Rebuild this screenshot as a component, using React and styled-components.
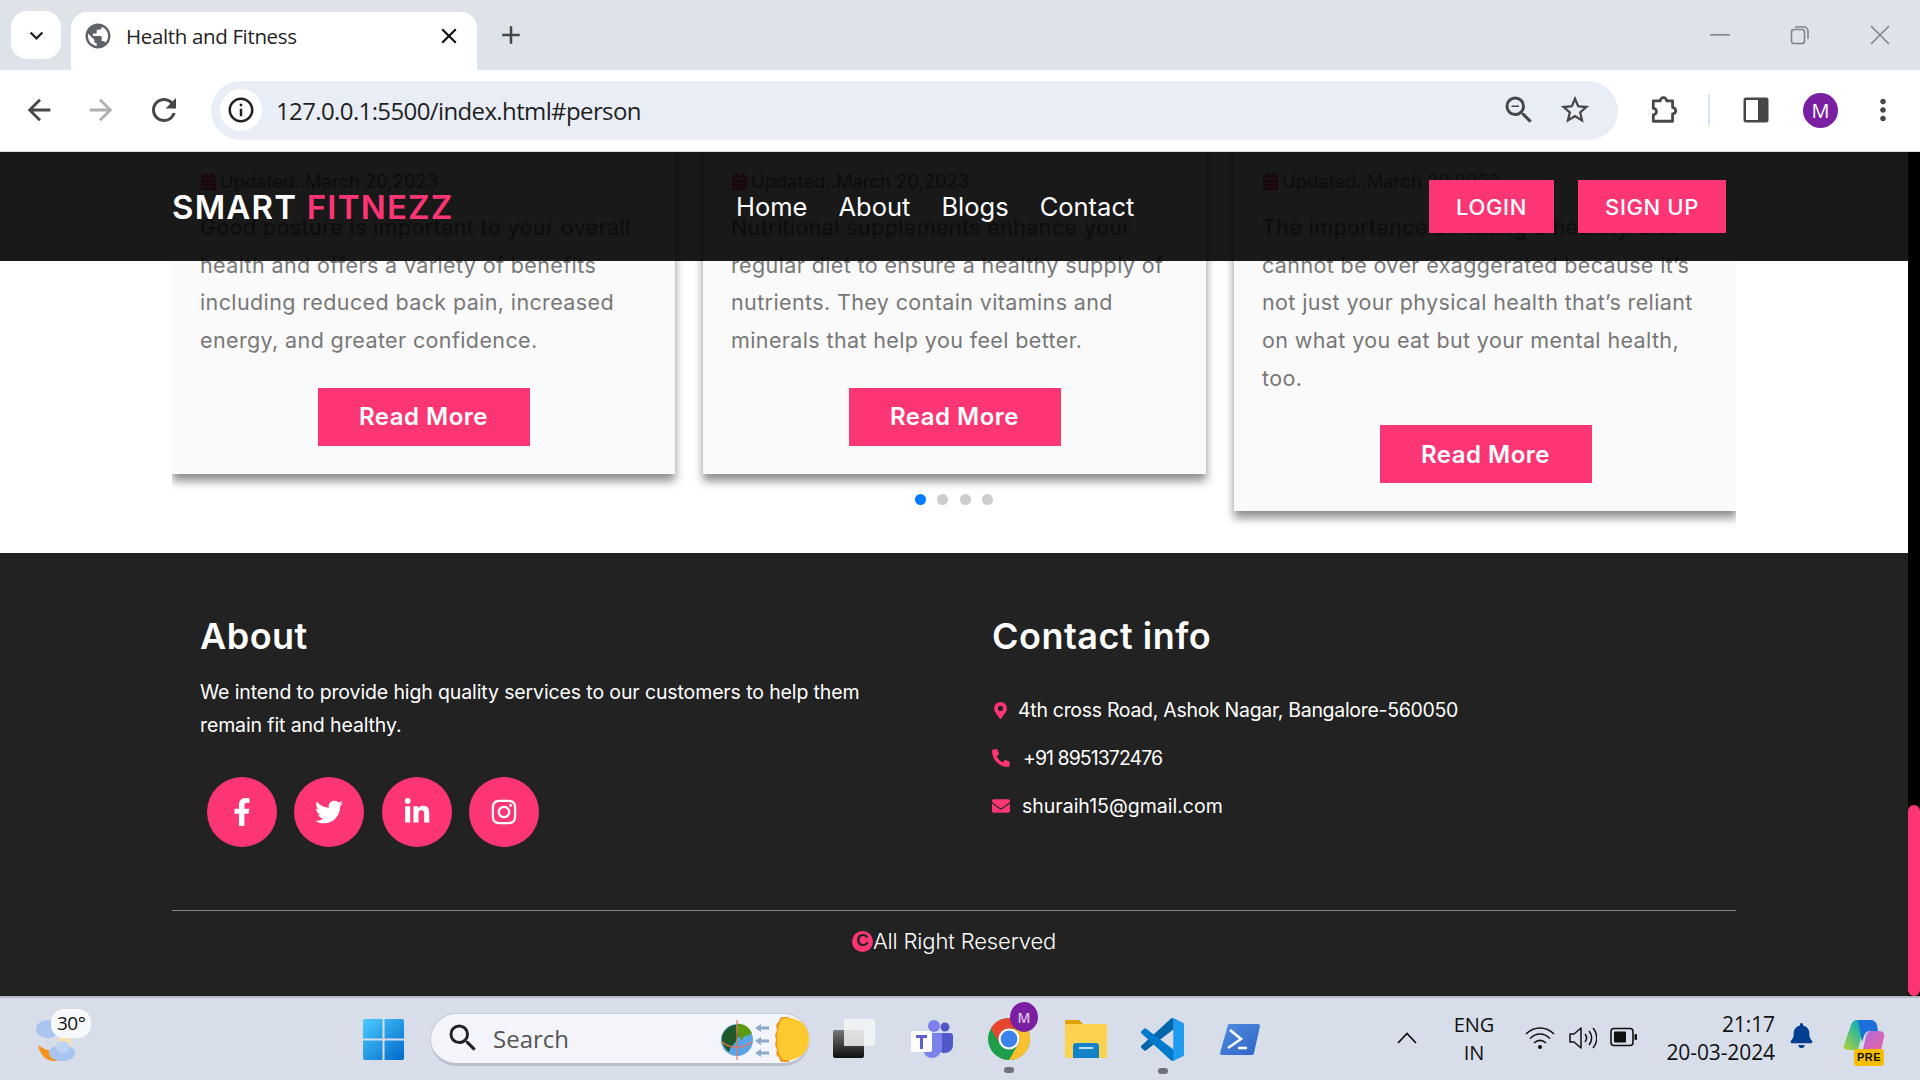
import React from "react";
import styled, { createGlobalStyle } from "styled-components";
import { FaFacebookF, FaTwitter, FaLinkedinIn, FaInstagram, FaMapMarkerAlt, FaPhoneAlt, FaEnvelope, FaCalendarAlt, FaBell } from "react-icons/fa";
import { MdPublic, MdClose, MdAdd, MdKeyboardArrowDown, MdArrowBack, MdArrowForward, MdRefresh, MdInfoOutline, MdZoomOut, MdStarBorder, MdMoreVert, MdSearch } from "react-icons/md";

const PINK = "#fc3574";
const PAGE_FONT = '"Inter", "Open Sans", sans-serif';
const UI_FONT = '"Open Sans", "Noto Sans", sans-serif';

const Global = createGlobalStyle`
  html, body { margin: 0; padding: 0; height: 100%; overflow: hidden; background: #fff; }
  * { box-sizing: border-box; }
`;

const Screen = styled.div`
  width: 1920px; height: 1080px; display: flex; flex-direction: column; overflow: hidden; font-family: ${PAGE_FONT};
`;

/* Browser chrome */
const TabStrip = styled.div`
  height: 70px; background: #dee3ea; display: flex; align-items: flex-end; padding-left: 11px; flex: none; color: #3c4043;
`;
const TabList = styled.button`
  width: 50px; height: 48px; margin-bottom: 11px; border: 0; border-radius: 16px; background: #fff; display: flex; align-items: center; justify-content: center; padding: 0; color: #1f1f1f; font-size: 27px;
`;
const Tab = styled.div`
  width: 406px; height: 58px; margin-left: 10px; background: #fff; border-radius: 16px 16px 0 0; display: flex; align-items: center; padding: 0 15px 11px 12px; font: 400 20.5px ${UI_FONT}; color: #1f1f1f;
  svg:first-child { color: #5f6368; font-size: 30px; margin-right: 13px; }
`;
const TabTitle = styled.span`
  flex: 1; letter-spacing: -0.35px;
`;
const TabClose = styled(MdClose)`
  font-size: 26px; color: #111;
`;
const NewTab = styled(MdAdd)`
  font-size: 30px; margin: 0 0 20px 19px; color: #444;
`;
const WindowButtons = styled.div`
  margin-left: auto; display: flex; align-items: center; height: 70px; color: #80858c;
`;
const WinSlot = styled.div`
  width: ${p => p.$w}px; display: flex; justify-content: center;
`;
const Toolbar = styled.div`
  height: 82px; flex: none; background: #fff; border-bottom: 1px solid #d9dbe0; border-radius: 12px 12px 0 0; display: flex; align-items: center; padding: 0 0 1px 7px;
`;
const NavIcon = styled.div`
  width: ${p => p.$w || 62}px; display: flex; justify-content: center; font-size: ${p => p.$s || 32}px; color: ${p => p.$c || "#474747"}; flex: none;
`;
const UrlPill = styled.div`
  width: 1407px; height: 59px; flex: none; border-radius: 30px; background: #e9edf6; display: flex; align-items: center; padding: 0 26px 0 9px; margin: 0 25px 0 14px;
`;
const InfoCircle = styled.div`
  width: 42px; height: 42px; border-radius: 50%; background: #fff; display: flex; align-items: center; justify-content: center; font-size: 30px; color: #1f1f1f; flex: none;
`;
const UrlText = styled.span`
  flex: 1; margin-left: 14px; font: 400 24px ${UI_FONT}; color: #1f1f1f; letter-spacing: -0.62px;
`;
const UrlIcon = styled.div`
  font-size: ${p => p.$s || 34}px; color: #474747; display: flex; margin-left: ${p => p.$ml || 0}px;
`;
const Separator = styled.div`
  width: 2px; height: 32px; background: #d3e3fd; margin: 0 25px 0 23px; flex: none; border-radius: 1px;
`;
const Avatar = styled.div`
  width: 35px; height: 35px; border-radius: 50%; background: #7b1fa2; color: #fff; display: flex; align-items: center; justify-content: center; font: 400 20px ${UI_FONT}; flex: none; margin: 0 24px 0 26px;
`;

/* Page */
const Viewport = styled.div`
  flex: 1; display: flex; min-height: 0;
`;
const Page = styled.div`
  flex: 1; position: relative; overflow: hidden; background: #fff; min-width: 0;
`;
const Scrollbar = styled.div`
  width: 12px; background: #000; display: flex; flex-direction: column; justify-content: flex-end; flex: none;
`;
const Thumb = styled.div`
  height: 191px; background: ${PINK}; border-radius: 6px;
`;
const Header = styled.header`
  position: absolute; top: 0; left: 0; right: 0; height: 109px; background: rgba(0,0,0,.9); z-index: 5; display: flex; align-items: center; padding: 0 182px 0 172px;
`;
const Logo = styled.div`
  width: 564px; font-weight: 600; font-size: 33px; letter-spacing: 1.2px; color: #fff; white-space: nowrap;
  span { color: ${PINK}; }
`;
const Menu = styled.nav`
  display: flex; gap: 31px;
`;
const MenuLink = styled.a`
  font-size: 25.5px; font-weight: 400; color: #fff;
`;
const Auth = styled.div`
  margin-left: auto; display: flex; gap: 24px;
`;
const AuthButton = styled.button`
  width: ${p => p.$w}px; height: 53px; border: 0; background: ${PINK}; color: #fff; font: 500 22px ${PAGE_FONT}; letter-spacing: .6px; padding: 0;
`;

const Carousel = styled.section`
  position: relative; margin: -14px 172px 0; width: 1564px; overflow: hidden; padding-bottom: 42px;
  display: flex; align-items: flex-start; gap: 28px;
`;
const Card = styled.article`
  width: 503px; flex: none; background: #fafafa; padding: 28px; box-shadow: 0 7px 9px rgba(0,0,0,.45); display: flex; flex-direction: column; align-items: center;
`;
const DateLine = styled.div`
  align-self: stretch; height: 30px; margin-bottom: 13px; display: flex; align-items: center; font-size: 18.4px; color: #777;
  svg { color: ${PINK}; font-size: 17px; margin-right: 3px; }
`;
const CardText = styled.p`
  align-self: stretch; margin: 0 0 28px; font-size: 21.5px; line-height: 37.65px; letter-spacing: .38px; color: #777; white-space: nowrap;
`;
const ReadMore = styled.button`
  width: 212px; height: 58px; border: 0; background: ${PINK}; color: #fff; font: 600 24px ${PAGE_FONT}; letter-spacing: .5px; padding: 0;
`;
const Dots = styled.div`
  position: absolute; left: 0; right: 0; bottom: 48px; display: flex; justify-content: center; gap: 11.5px;
`;
const Dot = styled.span`
  width: 11px; height: 11px; border-radius: 50%; background: ${p => p.$on ? "#007aff" : "#ccc"};
`;

const Footer = styled.footer`
  height: 443px; background: #222; padding: 61px 172px 0; color: #fff;
`;
const FooterGrid = styled.div`
  display: grid; grid-template-columns: 792px 1fr; padding-left: 28px; height: 296px;
`;
const FooterHeading = styled.h3`
  margin: 0; font-size: 36px; line-height: 44px; font-weight: 600; letter-spacing: .5px;
`;
const AboutText = styled.p`
  margin: 18px 0 35px; font-size: 19.5px; line-height: 33px; letter-spacing: -.12px; white-space: nowrap;
`;
const Socials = styled.div`
  display: flex; gap: 17.4px; padding-left: 7px;
`;
const Social = styled.a`
  width: 70px; height: 70px; border-radius: 50%; background: ${PINK}; color: #fff; display: flex; align-items: center; justify-content: center; font-size: 28px;
`;
const ContactList = styled.div`
  margin-top: 28px;
`;
const ContactRow = styled.div`
  height: 48px; display: flex; align-items: center; font-size: 19.5px; white-space: nowrap; letter-spacing: ${p => p.$ls || 0}px;
  svg { color: ${PINK}; flex: none; }
`;
const ContactIcon = styled.span`
  width: ${p => p.$w}px; display: flex;
`;
const Rule = styled.hr`
  margin: 0; border: 0; height: 1px; background: #888;
`;
const Copy = styled.div`
  margin-top: 15px; height: 30px; display: flex; justify-content: center; align-items: center; font-size: 22px; font-weight: 300; letter-spacing: -.15px; color: #fff;
`;
const CopyMark = styled.span`
  width: 21px; height: 21px; border-radius: 50%; background: ${PINK}; color: #222; display: flex; align-items: center; justify-content: center; font: 800 17px "Liberation Sans", sans-serif;
`;

/* Taskbar */
const Taskbar = styled.div`
  height: 84px; flex: none; background: #d7deea; border-top: 2px solid #b4b8c0; display: flex; align-items: center; position: relative; color: #111; font-family: ${UI_FONT};
`;
const Weather = styled.div`
  position: relative; width: 70px; height: 60px; margin-left: 28px; flex: none;
`;
const Temp = styled.span`
  position: absolute; left: 23px; top: 0; padding: 1px 6px; background: #f7f8fa; border-radius: 13px; font-size: 19px; line-height: 27px; letter-spacing: -.5px;
`;
const WinLogo = styled.div`
  margin-left: 265px; flex: none; display: flex;
`;
const SearchBox = styled.div`
  width: 380px; height: 53px; margin-left: 26px; border-radius: 27px; background: #f3f5fa; border: 1px solid #c4cad6; border-bottom: 3px solid #b9bfcc; display: flex; align-items: center; padding-left: 14px; overflow: hidden; flex: none; position: relative;
  > svg:first-child { font-size: 36px; color: #222; }
`;
const SearchText = styled.span`
  margin-left: 12px; font-size: 24px; color: #555; flex: 1;
`;
const AppSlot = styled.div`
  position: relative; width: ${p => p.$w}px; margin-left: ${p => p.$ml}px; display: flex; justify-content: center; flex: none;
`;
const Running = styled.span`
  position: absolute; left: 50%; bottom: -13px; width: 10px; height: 6px; margin-left: -5px; border-radius: 3px; background: #6d7278;
`;
const Badge = styled.span`
  position: absolute; right: -8px; top: -16px; width: 28px; height: 30px; border-radius: 50%; background: #7b1fa2; color: #d9c2e6; display: flex; align-items: center; justify-content: center; font-size: 14px; font-weight: 600;
`;
const Lang = styled.div`
  position: absolute; left: 1444px; width: 60px; top: 13px; text-align: center; font-size: 20px; line-height: 28px;
`;
const Tray = styled.div`
  position: absolute; left: ${p => p.$x}px; top: ${p => p.$y || 23}px; display: flex; font-size: ${p => p.$s || 34}px; color: #111;
`;
const Clock = styled.div`
  position: absolute; right: 145px; top: 12px; text-align: right; font-size: 21px; line-height: 28px; white-space: nowrap; letter-spacing: -.1px;
`;
const Pre = styled.span`
  position: absolute; left: 11px; bottom: -4px; width: 30px; height: 17px; background: #f7bd00; border-radius: 3px; font: 700 11px/17px "Liberation Sans", sans-serif; color: #111; text-align: center; letter-spacing: .5px;
`;
const CopilotBox = styled.div`
  position: absolute; left: 1843px; top: 22px; width: 42px; height: 42px;
`;

const SidePanel = () => (
  <svg width="26" height="26" viewBox="0 0 26 26"><rect x="0.5" y="0.5" width="25" height="25" rx="2.5" fill="#474747" /><rect x="3" y="3" width="12" height="20" fill="#fff" /></svg>
);
const Puzzle = () => (
  <svg width="30" height="30" viewBox="0 0 28 28" fill="none" stroke="#474747" strokeWidth="2.6" strokeLinejoin="round">
    <path d="M4 5.5h6.5a3 3 0 0 1 6 0H22v6.2a3 3 0 0 1 0 6V24.5H4v-6a3 3 0 0 0 0-6z" />
  </svg>
);
const Restore = () => (
  <svg width="20" height="20" viewBox="0 0 20 20" fill="none" stroke="#80858c" strokeWidth="1.6"><rect x="1.5" y="4.5" width="13" height="14" rx="2.5" /><path d="M5 2h8.5A4 4 0 0 1 18 6v8" /></svg>
);
const WindowClose = () => (
  <svg width="20" height="20" viewBox="0 0 20 20" stroke="#80858c" strokeWidth="1.6"><path d="M1 1l18 18M19 1L1 19" /></svg>
);
const Minimize = () => (
  <svg width="20" height="4" viewBox="0 0 20 4"><rect y="1" width="20" height="1.6" fill="#80858c" /></svg>
);
const WeatherArt = () => (
  <svg width="50" height="58" viewBox="0 0 50 58" style={{ position: "absolute", left: 6, top: 2 }}>
    <ellipse cx="14" cy="18" rx="12" ry="9" fill="#a9c4ee" />
    <path d="M4 34c2 12 12 20 24 14 6-4 8-10 7-18-3 8-10 13-18 10-5-1-9-3-13-6z" fill="#f3941b" />
    <path d="M26 21h10l2 16H24z" fill="#f6e3b0" />
    <ellipse cx="28" cy="42" rx="13" ry="8" fill="#a9c4ee" /><ellipse cx="29" cy="36" rx="7" ry="6" fill="#bcd3f3" />
  </svg>
);
const Earth = () => (
  <svg width="90" height="50" viewBox="0 0 90 50" style={{ position: "absolute", right: -2, top: 0 }}>
    <ellipse cx="16" cy="26" rx="16" ry="16" fill="#5aa5e8" />
    <path d="M1 22C5 11 16 8 24 13c2 5-4 7-7 10-2 7-7 8-9 15-5-4-8-10-7-16z" fill="#1f5a2a" />
    <path d="M16 10c6-1 12 3 15 9-4 4-8 1-10 7-4-3-7-10-5-16z" fill="#5a9a10" />
    <path d="M16 6v40" stroke="#f0705a" strokeWidth="1.2" /><path d="M1 28c8 7 22 7 30 0" stroke="#f0705a" strokeWidth="1.2" fill="none" />
    <path d="M34 14l6-4v2.5h8v3h-8V18zM34 27l6-4v2.5h8v3h-8V31zM34 39l6-4v2.5h8v3h-8V43z" fill="#8ea9c6" />
    <path d="M60 3l-2 4-3 4 1 5-2 5 1 5-1 5 2 5-1 4 3 4 2 4h8V3z" fill="#ef9a1f" />
    <path d="M62 4c-4 5-6 13-6 21s2 16 6 21h8c10-2 20-10 20-21S80 6 70 4z" fill="#fcc92e" />
  </svg>
);
const TaskView = () => (
  <svg width="42" height="40" viewBox="0 0 42 40">
    <defs><linearGradient id="tv" x1="0" y1="0" x2="0" y2="1"><stop offset="0" stopColor="#777" /><stop offset="1" stopColor="#0e0e0e" /></linearGradient></defs>
    <rect x="0" y="11" width="31" height="28" rx="2" fill="url(#tv)" />
    <rect x="11" y="0" width="31" height="27" rx="1" fill="#f4f4f4" fillOpacity=".85" />
  </svg>
);
const Teams = () => (
  <svg width="42" height="38" viewBox="0 0 42 38">
    <circle cx="23" cy="6" r="6" fill="#7b83eb" /><circle cx="34" cy="7" r="4.5" fill="#5059c9" />
    <path d="M28 13h11a3 3 0 0 1 3 3v9c0 5-4 8-8 8s-6-2-6-6z" fill="#5059c9" />
    <path d="M12 13h19v15c0 5-5 10-10 10-5 0-9-4-9-10z" fill="#7b83eb" />
    <rect x="0" y="11" width="21" height="21" rx="2" fill="#fdfdff" />
    <path d="M5 15h11v3h-4v11H9V18H5z" fill="#5a62c8" />
  </svg>
);
const ChromeLogo = () => (
  <svg width="42" height="42" viewBox="4 4 40 40">
    <circle cx="24" cy="24" r="20" fill="#1e9e4a" />
    <path d="M24 14H41.32A20 20 0 0 1 24 44L32.66 29A10 10 0 0 0 24 14z" fill="#fbc02d" />
    <path d="M24 4A20 20 0 0 1 41.32 14H24A10 10 0 0 0 15.34 29L6.68 14A20 20 0 0 1 24 4z" fill="#e8452f" />
    <circle cx="24" cy="24" r="10" fill="#fff" /><circle cx="24" cy="24" r="8" fill="#3b82ea" />
  </svg>
);
const Folder = () => (
  <svg width="42" height="38" viewBox="0 0 42 38">
    <path d="M0 2a2 2 0 0 1 2-2h12l4 4v4H0z" fill="#e0a100" />
    <rect x="0" y="4" width="42" height="34" rx="2" fill="#fdd24e" />
    <path d="M8 26a3 3 0 0 1 3-3h20a3 3 0 0 1 3 3v12H8z" fill="#1282c9" />
    <rect x="14" y="27" width="14" height="2" fill="#bfe0f5" />
  </svg>
);
const VSCode = () => (
  <svg width="43" height="43" viewBox="0 0 100 100">
    <path fill="#0065A9" d="M96.46 10.8 75.86.9a6.23 6.23 0 0 0-7.11 1.2L1.3 63.7a4.17 4.17 0 0 0 .01 6.16l5.5 5a4.17 4.17 0 0 0 5.32.24L93.4 12.9c2.73-2.07 6.6-.12 6.6 3.3v-.24a6.25 6.25 0 0 0-3.54-5.63z" />
    <path fill="#007ACC" d="M96.46 89.2 75.86 99.1a6.23 6.23 0 0 1-7.11-1.2L1.3 36.3a4.17 4.17 0 0 1 .01-6.16l5.5-5a4.17 4.17 0 0 1 5.32-.24L93.4 87.1c2.73 2.07 6.6.12 6.6-3.3v.24a6.25 6.25 0 0 1-3.54 5.63z" />
    <path fill="#1F9CF0" d="M75.86 99.13a6.23 6.23 0 0 1-7.11-1.2c2.3 2.3 6.25.67 6.25-2.59V4.66c0-3.26-3.95-4.89-6.25-2.59a6.23 6.23 0 0 1 7.11-1.2l20.6 9.9A6.25 6.25 0 0 1 100 16.4v67.2a6.25 6.25 0 0 1-3.54 5.63z" />
  </svg>
);
const PowerShell = () => (
  <svg width="40" height="31" viewBox="0 0 40 31">
    <defs><linearGradient id="ps" x1="0" y1="0" x2="1" y2="1"><stop offset="0" stopColor="#4f8ee0" /><stop offset="1" stopColor="#2f62c4" /></linearGradient></defs>
    <path d="M8 1a2 2 0 0 1 2-1h28a2 2 0 0 1 2 2l-6 27a2 2 0 0 1-2 2H2a2 2 0 0 1-2-2z" fill="url(#ps)" />
    <path d="M10 6l11 9-13 9" fill="none" stroke="#fff" strokeWidth="2.6" /><path d="M18 24h9" stroke="#fff" strokeWidth="2.6" />
  </svg>
);
const WinIcon = () => (
  <svg width="41" height="41" viewBox="0 0 41 41">
    <defs><linearGradient id="wl" x1="0" y1="0" x2="1" y2="1"><stop offset="0" stopColor="#4ccbff" /><stop offset="1" stopColor="#0069c9" /></linearGradient></defs>
    <rect width="41" height="41" fill="url(#wl)" rx="2" />
    <path d="M20.5 0v41M0 20.5h41" stroke="#d7deea" strokeWidth="2" />
  </svg>
);
const Chevron = () => (
  <svg width="20" height="12" viewBox="0 0 20 12" fill="none" stroke="#111" strokeWidth="1.8"><path d="M1 11l9-9.5L19 11" /></svg>
);
const Wifi = () => (
  <svg width="30" height="24" viewBox="0 0 30 24" fill="none" stroke="#111" strokeWidth="1.5">
    <path d="M1 8c8-8 20-8 28 0M5 12.5c6-6 14-6 20 0M9 17c4-3.5 8-3.5 12 0" /><circle cx="15" cy="21" r="2" fill="#111" stroke="none" />
  </svg>
);
const Speaker = () => (
  <svg width="28" height="24" viewBox="0 0 28 24" fill="none" stroke="#111" strokeWidth="1.5" strokeLinejoin="round">
    <path d="M1 8h4l7-6v20l-7-6H1zM16 8c2 2.500 2 5.500 0 8M20 5c3.500 4 3.500 10 0 14M24 2c5 6 5 14 0 20" />
  </svg>
);
const Battery = () => (
  <svg width="28" height="24" viewBox="0 0 28 24"><rect x="1" y="3.500" width="22" height="17" rx="3" fill="none" stroke="#111" strokeWidth="1.6" /><rect x="4" y="6.500" width="12" height="11" rx="1" fill="#111" /><rect x="24.500" y="9" width="2.500" height="6" rx="1" fill="#111" /></svg>
);
const Copilot = () => (
  <svg width="42" height="36" viewBox="0 0 42 36" style={{ position: "absolute", left: 0, top: 0 }}>
    <defs>
      <linearGradient id="c1" x1="0" y1="1" x2="1" y2="0"><stop offset="0" stopColor="#b5d63a" /><stop offset=".6" stopColor="#29b4a0" /><stop offset="1" stopColor="#1a8fe0" /></linearGradient>
      <linearGradient id="c2" x1="0" y1="0" x2="1" y2="1"><stop offset="0" stopColor="#a86ee8" /><stop offset="1" stopColor="#f0609a" /></linearGradient>
    </defs>
    <path d="M8 5c1-3 3-5 7-5h13c-4 0-6 3-7 6l-6 24H5c-3 0-5-2-4-5z" fill="url(#c1)" />
    <path d="M15 0h13c3 0 5 2 6 5l1 6h-7c-4 0-6 2-7 5l-2 6z" fill="#1c6fd8" />
    <path d="M28 11h8c4 0 6 3 5 6l-3 13c-1 3-3 5-7 5H14c3 0 5-3 6-6l3-13c1-3 3-5 5-5z" fill="url(#c2)" />
  </svg>
);

const cards = [
  { lines: ["Good posture is important to your overall", "health and offers a variety of benefits", "including reduced back pain, increased", "energy, and greater confidence."] },
  { lines: ["Nutritional supplements enhance your", "regular diet to ensure a healthy supply of", "nutrients. They contain vitamins and", "minerals that help you feel better."] },
  { lines: ["The importance of eating a healthy diet", "cannot be over exaggerated because it\u2019s", "not just your physical health that\u2019s reliant", "on what you eat but your mental health,", "too."] },
];

export default function App() {
  return (
    <Screen>
      <Global />
      <TabStrip>
        <TabList><MdKeyboardArrowDown /></TabList>
        <Tab><MdPublic /><TabTitle>Health and Fitness</TabTitle><TabClose /></Tab>
        <NewTab />
        <WindowButtons>
          <WinSlot $w={80}><Minimize /></WinSlot>
          <WinSlot $w={80}><Restore /></WinSlot>
          <WinSlot $w={80}><WindowClose /></WinSlot>
        </WindowButtons>
      </TabStrip>
      <Toolbar>
        <NavIcon $w={64} $s={34}><MdArrowBack /></NavIcon>
        <NavIcon $w={60} $s={34} $c="#b0b0b0"><MdArrowForward /></NavIcon>
        <NavIcon $w={66} $s={36}><MdRefresh /></NavIcon>
        <UrlPill>
          <InfoCircle><MdInfoOutline /></InfoCircle>
          <UrlText>127.0.0.1:5500/index.html#person</UrlText>
          <UrlIcon $s={36}><MdZoomOut /></UrlIcon>
          <UrlIcon $s={34} $ml={21}><MdStarBorder /></UrlIcon>
        </UrlPill>
        <NavIcon $w={42}><Puzzle /></NavIcon>
        <Separator />
        <NavIcon $w={42}><SidePanel /></NavIcon>
        <Avatar>M</Avatar>
        <NavIcon $w={42} $s={34}><MdMoreVert /></NavIcon>
      </Toolbar>

      <Viewport>
        <Page>
          <Header>
            <Logo>SMART <span>FITNEZZ</span></Logo>
            <Menu>
              <MenuLink>Home</MenuLink>
              <MenuLink>About</MenuLink>
              <MenuLink>Blogs</MenuLink>
              <MenuLink>Contact</MenuLink>
            </Menu>
            <Auth>
              <AuthButton $w={125}>LOGIN</AuthButton>
              <AuthButton $w={148}>SIGN UP</AuthButton>
            </Auth>
          </Header>
          <Carousel>
            {cards.map((c, i) => (
              <Card key={i}>
                <DateLine><FaCalendarAlt />Updated..March 20,2023</DateLine>
                <CardText>{c.lines.map((l, j) => <React.Fragment key={j}>{l}<br /></React.Fragment>)}</CardText>
                <ReadMore>Read More</ReadMore>
              </Card>
            ))}
            <Dots><Dot $on /><Dot /><Dot /><Dot /></Dots>
          </Carousel>
          <Footer>
            <FooterGrid>
              <div>
                <FooterHeading>About</FooterHeading>
                <AboutText>We intend to provide high quality services to our customers to help them<br />remain fit and healthy.</AboutText>
                <Socials>
                  <Social><FaFacebookF /></Social>
                  <Social><FaTwitter /></Social>
                  <Social><FaLinkedinIn /></Social>
                  <Social><FaInstagram /></Social>
                </Socials>
              </div>
              <div>
                <FooterHeading>Contact info</FooterHeading>
                <ContactList>
                  <ContactRow $ls={-0.3}><ContactIcon $w={26}><FaMapMarkerAlt size={17} /></ContactIcon>4th cross Road, Ashok Nagar, Bangalore-560050</ContactRow>
                  <ContactRow $ls={-0.95}><ContactIcon $w={31}><FaPhoneAlt size={18} /></ContactIcon>+91 8951372476</ContactRow>
                  <ContactRow><ContactIcon $w={30}><FaEnvelope size={18} /></ContactIcon>shuraih15@gmail.com</ContactRow>
                </ContactList>
              </div>
            </FooterGrid>
            <Rule />
            <Copy><CopyMark>C</CopyMark>All Right Reserved</Copy>
          </Footer>
        </Page>
        <Scrollbar><Thumb /></Scrollbar>
      </Viewport>

      <Taskbar>
        <Weather><WeatherArt /><Temp>30°</Temp></Weather>
        <WinLogo><WinIcon /></WinLogo>
        <SearchBox><MdSearch /><SearchText>Search</SearchText><Earth /></SearchBox>
        <AppSlot $w={42} $ml={23}><TaskView /></AppSlot>
        <AppSlot $w={42} $ml={36}><Teams /></AppSlot>
        <AppSlot $w={42} $ml={35}><ChromeLogo /><Badge>M</Badge><Running /></AppSlot>
        <AppSlot $w={42} $ml={35}><Folder /></AppSlot>
        <AppSlot $w={43} $ml={34}><VSCode /><Running /></AppSlot>
        <AppSlot $w={40} $ml={36}><PowerShell /></AppSlot>
        <Tray $x={1397} $y={34}><Chevron /></Tray>
        <Lang>ENG<br />IN</Lang>
        <Tray $x={1525} $y={28}><Wifi /></Tray>
        <Tray $x={1569} $y={28}><Speaker /></Tray>
        <Tray $x={1610} $y={27}><Battery /></Tray>
        <Clock>21:17<br />20-03-2024</Clock>
        <Tray $x={1789} $y={25} $s={25}><FaBell color="#003e92" /></Tray>
        <CopilotBox><Copilot /><Pre>PRE</Pre></CopilotBox>
      </Taskbar>
    </Screen>
  );
}
